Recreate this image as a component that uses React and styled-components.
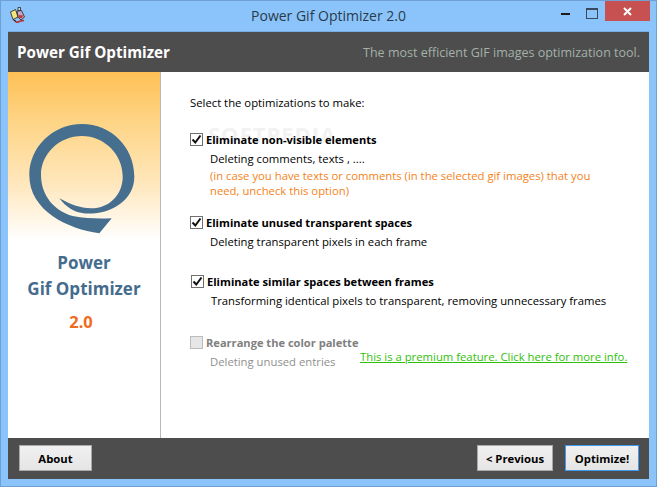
import React from 'react';
import styled, { createGlobalStyle } from 'styled-components';

const Global = createGlobalStyle`
  html, body { margin: 0; padding: 0; background: #8ac4fa; }
  body { font-family: "Open Sans", "Noto Sans", sans-serif; }
  * { box-sizing: border-box; }
`;

const Window = styled.div`
  width: 657px;
  height: 487px;
  background: #8ac4fa;
  border: 1px solid #6f9fd3;
  display: flex;
  flex-direction: column;
  padding: 0 7px 7px;
`;

const TitleBar = styled.div`
  height: 30px;
  flex: none;
  display: flex;
  align-items: flex-start;
  position: relative;
`;

const AppIcon = styled.svg`
  width: 16px;
  height: 16px;
  margin: 6px 0 0 2px;
`;

const TitleText = styled.div`
  position: absolute;
  left: 0;
  right: 0;
  top: 4px;
  text-align: center;
  font-size: 14px;
  line-height: 22px;
  color: #2a3a4a;
`;

const WinControls = styled.div`
  margin-left: auto;
  display: flex;
  align-items: flex-start;
`;

const MinBtn = styled.div`
  width: 26px;
  height: 21px;
  display: flex;
  justify-content: center;
  align-items: flex-end;
  padding-bottom: 7px;
  &::after { content: ""; width: 9px; height: 2px; background: #1c1c1c; }
`;

const MaxBtn = styled.div`
  width: 27px;
  height: 21px;
  display: flex;
  justify-content: center;
  padding-top: 7px;
  &::after { content: ""; width: 10px; height: 8px; border: 1px solid #3a4a5e; border-top-width: 2px; }
`;

const CloseBtn = styled.div`
  width: 45px;
  height: 20px;
  background: #c75050;
  display: flex;
  align-items: center;
  justify-content: center;
  margin-right: -1px;
`;

const Client = styled.div`
  flex: 1;
  min-height: 0;
  display: flex;
  flex-direction: column;
  background: #fff;
  border-top: 1px solid #79aee0;
`;

const Header = styled.div`
  height: 40px;
  flex: none;
  background: #4d4d4d;
  display: flex;
  align-items: center;
  justify-content: space-between;
  padding: 0 9px;
`;

const AppName = styled.div`
  color: #fff;
  font-size: 15.2px;
  font-weight: 700;
`;

const Tagline = styled.div`
  color: #a3b1a9;
  font-size: 12.5px;
`;

const Body = styled.div`
  flex: 1;
  min-height: 0;
  display: flex;
`;

const Side = styled.div`
  width: 153px;
  flex: none;
  border-right: 1px solid #b8b8b8;
  background: linear-gradient(#fec055 0, #fed587 14%, #ffe6ba 30%, #fff 46%, #fff 100%);
  display: flex;
  flex-direction: column;
  align-items: center;
  padding-top: 51px;
`;

const Logo = styled.svg`
  width: 108px;
  height: 112px;
  display: block;
  margin-left: -5px;
`;

const Product = styled.div`
  margin-top: 15px;
  color: #456c8d;
  font-size: 17px;
  font-weight: 700;
  line-height: 26px;
  text-align: center;
`;

const Version = styled.div`
  margin: 7px 6px 0 0;
  color: #f26a1b;
  font-size: 16.5px;
  font-weight: 700;
  line-height: 25px;
`;

const Main = styled.div`
  flex: 1;
  padding: 22px 0 0 29px;
  position: relative;
  font-size: 11.3px;
  color: #000;
`;

const Lead = styled.div`
  line-height: 17px;
  margin-bottom: 20px;
`;

const Watermark = styled.div`
  position: absolute;
  left: 47px;
  top: 50px;
  font-size: 22px;
  line-height: 24px;
  font-weight: 700;
  letter-spacing: 1px;
  color: #f2f2f2;
`;

const Option = styled.div`
  position: relative;
  margin-bottom: ${p => p.$gap}px;
  margin-left: ${p => p.$indent || 0}px;
`;

const OptionHead = styled.div`
  display: flex;
  align-items: center;
  gap: 3px;
  height: 16px;
  font-size: 11.1px;
  font-weight: 700;
  color: ${p => (p.$off ? '#808080' : '#000')};
`;

const Check = styled.div`
  width: 13px;
  height: 13px;
  flex: none;
  border: 1px solid ${p => (p.$off ? '#bcbcbc' : '#707070')};
  background: ${p => (p.$off ? '#e6e6e6' : '#fff')};
  display: flex;
`;

const Desc = styled.div`
  margin: 4px 0 0 20px;
  line-height: 16px;
  color: ${p => (p.$off ? '#8f8f8f' : '#000')};
`;

const Note = styled.div`
  margin: 1px 0 0 20px;
  line-height: 15px;
  color: #f58220;
  width: 400px;
`;

const PremiumLink = styled.a`
  position: absolute;
  left: 170px;
  top: 15px;
  color: #2fc10a;
  text-decoration: underline;
  white-space: nowrap;
`;

const Footer = styled.div`
  height: 41px;
  flex: none;
  background: #4d4d4d;
  display: flex;
  align-items: flex-start;
  padding: 7px 10px 0 11px;
  gap: 12px;
`;

const Button = styled.button`
  height: 26px;
  width: ${p => p.$w}px;
  margin-left: ${p => (p.$push ? 'auto' : 0)};
  padding: 0;
  border: 1px solid ${p => (p.$focus ? '#3c9af0' : '#a9a9a9')};
  background: linear-gradient(#f1f1f1, #e5e5e5);
  font-family: inherit;
  font-size: 11.3px;
  font-weight: 700;
  color: #000;
`;

const CheckMark = () => (
  <svg width="11" height="11" viewBox="0 0 11 11">
    <path d="M1.5 5.5 L4.3 8.5 L9.5 1.5" fill="none" stroke="#111" strokeWidth="2" />
  </svg>
);

const App = () => {
  return (
    <>
      <Global />
      <Window>
        <TitleBar>
          <AppIcon viewBox="0 0 16 16">
            <path d="M0.5 5 L5.5 2.5 L8 10 L3 12.5 Z" fill="#f3e57e" stroke="#222" strokeWidth="0.8" />
            <path d="M8 0.5 L10.5 0.5 L10.5 3.5 L8 3.5 Z" fill="#d8d8e0" stroke="#222" strokeWidth="0.8" />
            <path d="M7 4 L11.5 3.5 L14.5 10 L11 13 L8 10 Z" fill="#c9a3c4" stroke="#222" strokeWidth="0.8" />
            <path d="M8.5 8 L13 8.5 L12 11 L9.5 11 Z" fill="#c7312f" />
            <path d="M4 13 L7 15.5 L10.5 14 L14 13.5" fill="none" stroke="#b52a2a" strokeWidth="1.5" />
            <path d="M3 12.5 L6 14.5" fill="none" stroke="#222" strokeWidth="1" />
          </AppIcon>
          <TitleText>Power Gif Optimizer 2.0</TitleText>
          <WinControls>
            <MinBtn />
            <MaxBtn />
            <CloseBtn>
              <svg width="9" height="9" viewBox="0 0 9 9">
                <path d="M1 1 L8 8 M8 1 L1 8" stroke="#fff" strokeWidth="2" />
              </svg>
            </CloseBtn>
          </WinControls>
        </TitleBar>
        <Client>
          <Header>
            <AppName>Power Gif Optimizer</AppName>
            <Tagline>The most efficient GIF images optimization tool.</Tagline>
          </Header>
          <Body>
            <Side>
              <Logo viewBox="0 0 108 112">
                <path
                  d="M71.3 110.3 C40 106 1.3 88 1.3 52 C1.3 24 25 1 54 1 C83 1 106.3 24 106.3 53.7 C106.3 78 82 92 57 90.5 C46 89.5 38 84 31.3 75.3 C42 81 52 85.3 63 85.3 C82 85.3 94.7 71 94.7 53.7 C94.7 31 76 13 54 13 C31 13 13 31 13 52 C13 72 26 88 44.7 93 C58 95.5 70 95.8 83.7 95.3 Z"
                  fill="#456e8f"
                />
              </Logo>
              <Product>Power<br />Gif Optimizer</Product>
              <Version>2.0</Version>
            </Side>
            <Main>
              <Watermark>SOFTPEDIA</Watermark>
              <Lead>Select the optimizations to make:</Lead>
              <Option $gap={16}>
                <OptionHead><Check><CheckMark /></Check>Eliminate non-visible elements</OptionHead>
                <Desc>Deleting comments, texts , ....</Desc>
                <Note>(in case you have texts or comments (in the selected gif images) that you need, uncheck this option)</Note>
              </Option>
              <Option $gap={23}>
                <OptionHead><Check><CheckMark /></Check>Eliminate unused transparent spaces</OptionHead>
                <Desc>Deleting transparent pixels in each frame</Desc>
              </Option>
              <Option $gap={25} $indent={1}>
                <OptionHead><Check><CheckMark /></Check>Eliminate similar spaces between frames</OptionHead>
                <Desc>Transforming identical pixels to transparent, removing unnecessary frames</Desc>
              </Option>
              <Option $gap={0}>
                <OptionHead $off><Check $off />Rearrange the color palette</OptionHead>
                <Desc $off>Deleting unused entries</Desc>
                <PremiumLink>This is a premium feature. Click here for more info.</PremiumLink>
              </Option>
            </Main>
          </Body>
          <Footer>
            <Button $w={73}>About</Button>
            <Button $w={76} $push>&lt; Previous</Button>
            <Button $w={74} $focus>Optimize!</Button>
          </Footer>
        </Client>
      </Window>
    </>
  );
};

export default App;
